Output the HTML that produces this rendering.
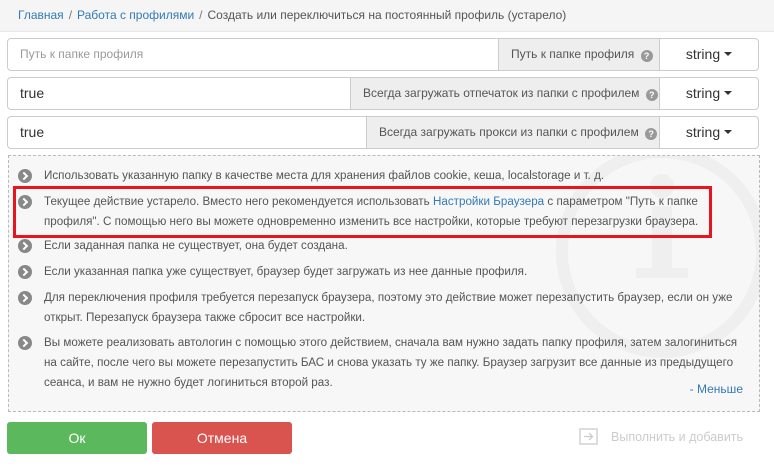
<!DOCTYPE html>
<html><head><meta charset="utf-8"><style>
*{margin:0;padding:0;box-sizing:border-box}
body{width:774px;height:470px;background:#fff;font-family:"Liberation Sans",sans-serif;position:relative;overflow:hidden;color:#555}
.bc{position:absolute;left:0;top:0;width:774px;height:32px;background:#f5f5f5;border-bottom:1px solid #e8e8e8;font-size:12px;line-height:30px;padding-left:18px;color:#555}
.bc a{color:#337ab7;text-decoration:none}
.bc .s{color:#777;margin:0 5px}
.row{position:absolute;left:7px;width:752px;height:33px;border:1px solid #ccc;border-radius:4px;background:#fff}
.row .v{position:absolute;left:12px;top:0;line-height:31px;font-size:14px;color:#333}
.row .ph{color:#999;font-size:12px}
.row .lab{position:absolute;top:-1px;height:33px;right:98px;background:#eee;border:1px solid #ccc;font-size:12px;line-height:31px;padding:0 12px 0 12px;color:#555;text-align:right;white-space:nowrap}
.q{display:inline-block;width:12px;height:12px;border-radius:50%;background:#999;color:#fff;font-size:9px;line-height:12px;text-align:center;font-weight:bold;vertical-align:-1px;margin-left:3px}
.row .st{position:absolute;right:0;top:0;width:98px;line-height:31px;text-align:center;font-size:14px;color:#333}
.car{display:inline-block;width:0;height:0;border-left:4px solid transparent;border-right:4px solid transparent;border-top:4px solid #333;vertical-align:3px;margin-left:4px}
.box{position:absolute;left:8px;top:155px;width:752px;height:257px;border:1px dashed #bbb;background:#f7f7f7;overflow:hidden}
.p{position:absolute;left:35px;font-size:11.65px;line-height:20px;color:#555;white-space:nowrap}
.b{position:absolute;left:9px;width:14px;height:14px;border-radius:50%;background:#888}
.b:after{content:"";position:absolute;left:3px;top:4px;width:4px;height:4px;border-right:2px solid #fff;border-top:2px solid #fff;transform:rotate(45deg)}
.p a{color:#337ab7;text-decoration:none}
.red{position:absolute;left:13px;top:186px;width:699px;height:52px;border:3px solid #e8141f}
.btn{position:absolute;top:422px;height:32px;border-radius:3px;color:#fff;font-size:14px;line-height:32px;text-align:center}
</style></head><body>
<div class="bc"><a>Главная</a><span class="s">/</span><a>Работа с профилями</a><span class="s">/</span>Создать или переключиться на постоянный профиль (устарело)</div>

<div class="row" style="top:38px"><span class="v ph">Путь к папке профиля</span><span class="lab" style="left:490px">Путь к папке профиля <span class="q">?</span></span><span class="st">string<span class="car"></span></span></div>
<div class="row" style="top:77px"><span class="v">true</span><span class="lab" style="left:342px">Всегда загружать отпечаток из папки с профилем <span class="q">?</span></span><span class="st">string<span class="car"></span></span></div>
<div class="row" style="top:116px"><span class="v">true</span><span class="lab" style="left:358px">Всегда загружать прокси из папки с профилем <span class="q">?</span></span><span class="st">string<span class="car"></span></span></div>

<div class="box">
<svg style="position:absolute;left:545px;top:-12px" width="220" height="230"><circle cx="108" cy="108" r="100" fill="none" stroke="#efefef" stroke-width="12"/><circle cx="108" cy="42" r="12" fill="#efefef"/><rect x="98" y="62" width="20" height="70" fill="#efefef"/><rect x="82" y="124" width="52" height="10" fill="#efefef"/></svg>
<div class="b" style="top:13px"></div><div class="p" style="top:10px">Использовать указанную папку в качестве места для хранения файлов cookie, кеша, localstorage и т. д.</div>
<div class="b" style="top:39px"></div><div class="p" style="top:36px">Текущее действие устарело. Вместо него рекомендуется использовать <a>Настройки Браузера</a> с параметром "Путь к папке<br>профиля". С помощью него вы можете одновременно изменить все настройки, которые требуют перезагрузки браузера.</div>
<div class="b" style="top:83px"></div><div class="p" style="top:80px">Если заданная папка не существует, она будет создана.</div>
<div class="b" style="top:109px"></div><div class="p" style="top:106px">Если указанная папка уже существует, браузер будет загружать из нее данные профиля.</div>
<div class="b" style="top:135px"></div><div class="p" style="top:132px">Для переключения профиля требуется перезапуск браузера, поэтому это действие может перезапустить браузер, если он уже<br>открыт. Перезапуск браузера также сбросит все настройки.</div>
<div class="b" style="top:180px"></div><div class="p" style="top:177px">Вы можете реализовать автологин с помощью этого действием, сначала вам нужно задать папку профиля, затем залогиниться<br>на сайте, после чего вы можете перезапустить БАС и снова указать ту же папку. Браузер загрузит все данные из предыдущего<br>сеанса, и вам не нужно будет логиниться второй раз.</div>
<div style="position:absolute;right:16px;top:226px;font-size:12px;color:#337ab7">- Меньше</div>
</div>
<div class="red"></div>

<div class="btn" style="left:7px;width:140px;background:#5cb85c">Ок</div>
<div class="btn" style="left:152px;width:140px;background:#d9534f">Отмена</div>
<svg style="position:absolute;left:579px;top:428px" width="20" height="18"><rect x="1" y="1" width="17" height="15" fill="none" stroke="#ddd" stroke-width="2"/><path d="M5 8.5h8M10 5l3.5 3.5L10 12" fill="none" stroke="#ccc" stroke-width="1.3"/></svg>
<div style="position:absolute;left:611px;top:430px;font-size:12.5px;color:#ccc">Выполнить и добавить</div>
</body></html>
